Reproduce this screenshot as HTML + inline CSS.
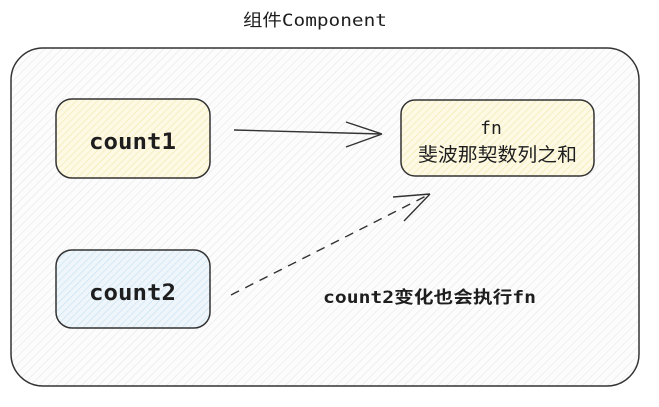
<!DOCTYPE html>
<html><head><meta charset="utf-8"><style>
body{margin:0;background:#fff;width:659px;height:402px;overflow:hidden}
svg text{font-family:"DejaVu Sans Mono","Noto Sans CJK SC",monospace;fill:#1e1e1e}
</style></head><body>
<svg width="659" height="402" xmlns="http://www.w3.org/2000/svg">
<defs>
<pattern id="h" width="6" height="6" patternUnits="userSpaceOnUse" patternTransform="rotate(45)">
<rect width="6" height="6" fill="#fcfcfc"/><line x1="0" y1="0" x2="0" y2="6" stroke="#e4e4e4" stroke-width="1"/></pattern>
<pattern id="y" width="5" height="5" patternUnits="userSpaceOnUse" patternTransform="rotate(45)">
<rect width="5" height="5" fill="#fdf9e4"/><line x1="0" y1="0" x2="0" y2="5" stroke="#f2e9a8" stroke-width="1.2"/></pattern>
<pattern id="b" width="5" height="5" patternUnits="userSpaceOnUse" patternTransform="rotate(45)">
<rect width="5" height="5" fill="#eef6fb"/><line x1="0" y1="0" x2="0" y2="5" stroke="#c6dff0" stroke-width="1.2"/></pattern>
</defs>
<text x="243" y="26" font-size="17" textLength="144" lengthAdjust="spacingAndGlyphs">组件Component</text>
<rect x="11" y="48" width="628" height="338" rx="32" fill="url(#h)" stroke="#333" stroke-width="1.5"/>
<rect x="56" y="99" width="154" height="79" rx="16" fill="url(#y)" stroke="#333" stroke-width="1.5"/>
<text x="89" y="149" font-size="22" font-weight="bold" textLength="87" lengthAdjust="spacingAndGlyphs">count1</text>
<rect x="401" y="100" width="193" height="76" rx="14" fill="url(#y)" stroke="#333" stroke-width="1.5"/>
<text x="491" y="134" font-size="18" text-anchor="middle">fn</text>
<text x="418" y="161" font-size="19" textLength="159" lengthAdjust="spacingAndGlyphs">斐波那契数列之和</text>
<rect x="56" y="250" width="154" height="78" rx="16" fill="url(#b)" stroke="#333" stroke-width="1.5"/>
<text x="89" y="300" font-size="22" font-weight="bold" textLength="87" lengthAdjust="spacingAndGlyphs">count2</text>
<path d="M234 130 L382 134 M346 122 L382 134 M346 147 L382 134" stroke="#333" stroke-width="1.4" fill="none"/>
<path d="M231 295 L428 195" stroke="#333" stroke-width="1.4" fill="none" stroke-dasharray="9 7"/>
<path d="M393 197 L430 194 M404 221 L430 194" stroke="#333" stroke-width="1.4" fill="none"/>
<text x="323" y="303" font-size="17" font-weight="bold" textLength="213" lengthAdjust="spacingAndGlyphs">count2变化也会执行fn</text>
</svg>
</body></html>
